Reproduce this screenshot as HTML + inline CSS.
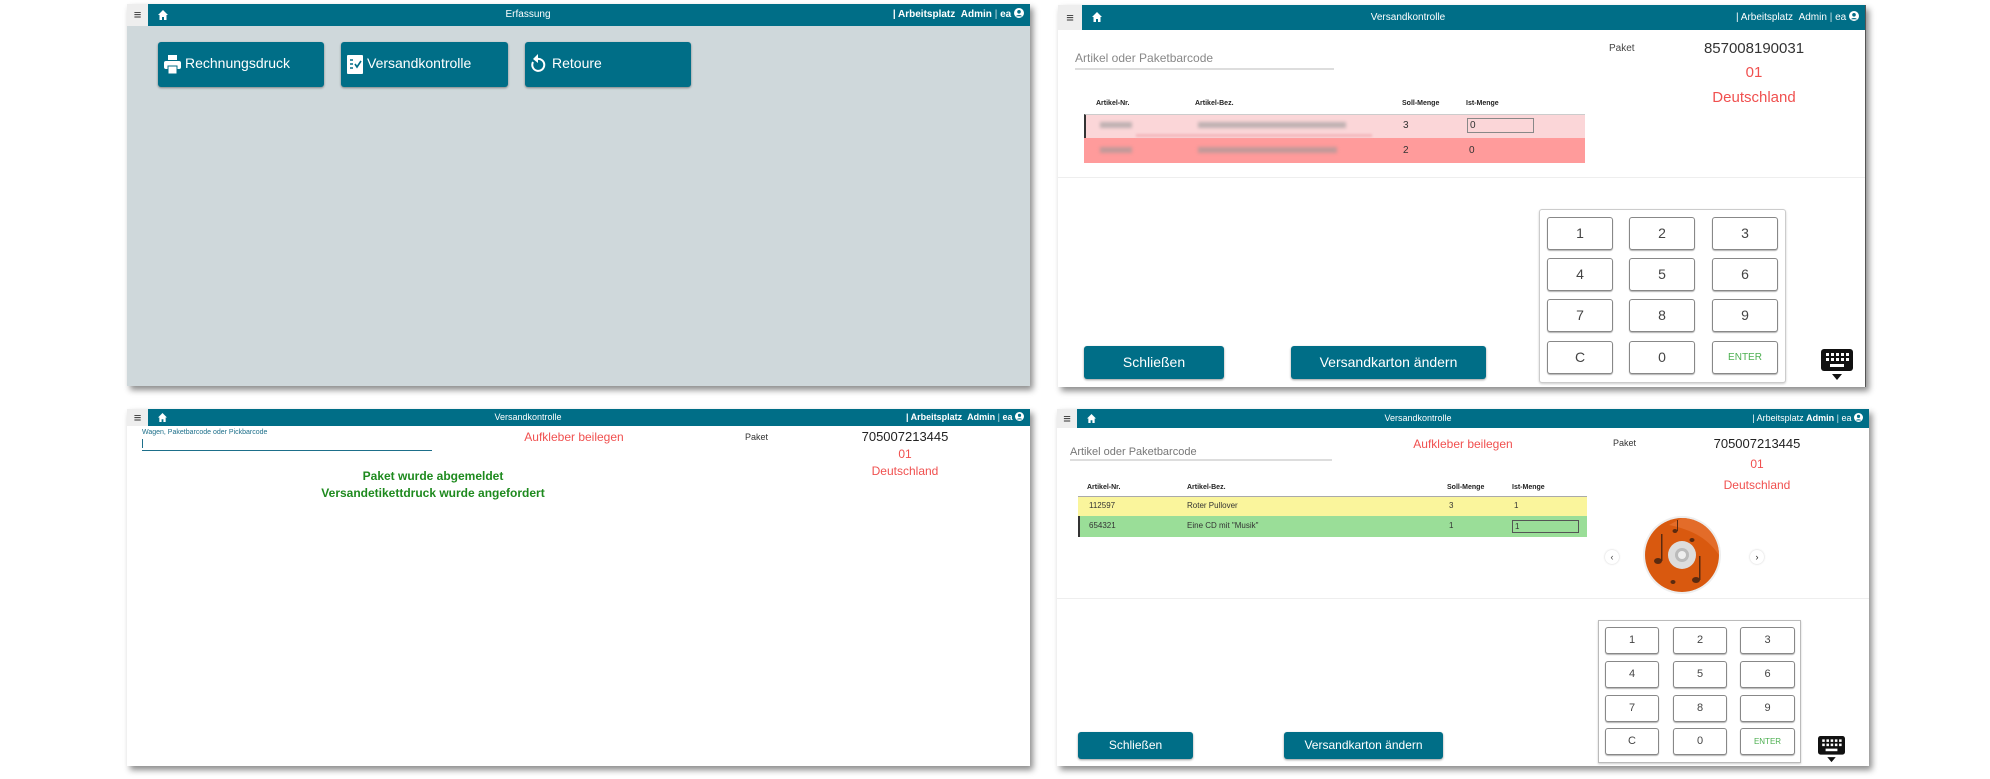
<!DOCTYPE html>
<html><head><meta charset="utf-8">
<style>
*{margin:0;padding:0;box-sizing:border-box}
body{width:1990px;height:779px;background:#fff;position:relative;overflow:hidden;font-family:"Liberation Sans",sans-serif}
.a{position:absolute}
.panel{position:absolute;background:#fff;box-shadow:3px 4px 6px rgba(0,0,0,.45)}
.hdr{position:absolute;left:0;right:0;top:0;background:#006e87;color:#fff;font-size:10px}
.ham{position:absolute;left:0;top:0;bottom:0;background:#eee;color:#333;font-size:13px;text-align:center}
.hdr .t{position:absolute;width:200px;text-align:center}
.hdr .r{position:absolute;right:6px;white-space:nowrap;font-weight:bold}
.hdr .r span{font-weight:normal;opacity:.8}
.btn{position:absolute;background:#006e87;color:#fff;border-radius:3px;box-shadow:0 1px 2px rgba(0,0,0,.4)}
.key{position:absolute;border:1.5px solid #888;border-radius:3px;background:#fff;text-align:center;color:#444;box-shadow:0 1px 1px rgba(0,0,0,.3)}
.red{color:#f0504f}
.th{position:absolute;font-size:7px;font-weight:bold;color:#222}
.blur{position:absolute;background:#999;filter:blur(1.5px);opacity:.6;height:6px}
</style></head><body>

<!-- PANEL 1 -->
<div class="panel" style="left:127px;top:4px;width:903px;height:382px;background:#cfd8db">
 <div class="hdr" style="height:22px">
  <div class="ham" style="width:21px;line-height:22px">≡</div>
  <svg class="a" style="left:31px;top:6px" width="10" height="10" viewBox="0 0 10 10"><path d="M5 0L0 5h1.5v5h2.5V7h2v3h2.5V5H10z" fill="#fff"/></svg>
  <div class="t" style="left:301px;line-height:22px;font-size:10px">Erfassung</div>
  <div class="r" style="line-height:22px;font-size:10px">| Arbeitsplatz &nbsp;Admin <span>|</span> ea <svg width="10" height="10" viewBox="0 0 10 10" style="vertical-align:-1px"><circle cx="5" cy="5" r="5" fill="#fff"/><circle cx="5" cy="3.8" r="1.8" fill="#006e87"/><path d="M1.8 8.2a4 3 0 0 1 6.4 0" fill="#006e87"/></svg></div>
 </div>
 <div class="btn" style="left:31px;top:38px;width:166px;height:45px">
  <svg class="a" style="left:6px;top:13px" width="17" height="19" viewBox="0 0 17 19"><rect x="4" y="0" width="9" height="5" fill="#fff"/><rect x="0" y="6" width="17" height="8" rx="2" fill="#fff"/><rect x="4" y="11" width="9" height="8" fill="#fff" stroke="#006e87"/></svg>
  <div class="a" style="left:27px;top:13px;font-size:14px">Rechnungsdruck</div>
 </div>
 <div class="btn" style="left:214px;top:38px;width:167px;height:45px">
  <svg class="a" style="left:6px;top:13px" width="16" height="19" viewBox="0 0 16 19"><rect width="16" height="19" rx="1" fill="#fff"/><path d="M3 5h3M3 9h3M3 13h3M8 9l2 3 4-6" stroke="#006e87" stroke-width="1.6" fill="none"/></svg>
  <div class="a" style="left:26px;top:13px;font-size:14px">Versandkontrolle</div>
 </div>
 <div class="btn" style="left:398px;top:38px;width:166px;height:45px">
  <svg class="a" style="left:6px;top:11px" width="16" height="22" viewBox="0 0 16 22"><path d="M6 6a6 6 0 1 1-4 3" stroke="#fff" stroke-width="2" fill="none"/><path d="M7 1v9L2 6z" fill="#fff"/></svg>
  <div class="a" style="left:27px;top:13px;font-size:14px">Retoure</div>
 </div>
</div>

<!-- PANEL 2 -->
<div class="panel" style="left:1058px;top:5px;width:808px;height:382px;border-right:1px solid #555">
 <div class="hdr" style="height:25px">
  <div class="ham" style="width:24px;line-height:25px">≡</div>
  <svg class="a" style="left:34px;top:7px" width="10" height="10" viewBox="0 0 10 10"><path d="M5 0L0 5h1.5v5h2.5V7h2v3h2.5V5H10z" fill="#fff"/></svg>
  <div class="t" style="left:250px;line-height:25px;font-size:10px">Versandkontrolle</div>
  <div class="r" style="line-height:25px;font-size:10px;font-weight:normal">| Arbeitsplatz &nbsp;Admin <span>|</span> ea <svg width="10" height="10" viewBox="0 0 10 10" style="vertical-align:-1px"><circle cx="5" cy="5" r="5" fill="#fff"/><circle cx="5" cy="3.8" r="1.8" fill="#006e87"/><path d="M1.8 8.2a4 3 0 0 1 6.4 0" fill="#006e87"/></svg></div>
 </div>
 <div class="a" style="left:17px;top:46px;font-size:12px;color:#888">Artikel oder Paketbarcode</div>
 <div class="a" style="left:17px;top:63px;width:259px;height:2px;background:#ddd"></div>
 <div class="a" style="left:551px;top:38px;font-size:10px;color:#444">Paket</div>
 <div class="a" style="left:636px;top:35px;width:120px;text-align:center;font-size:15px;color:#333">857008190031</div>
 <div class="a red" style="left:636px;top:59px;width:120px;text-align:center;font-size:15px">01</div>
 <div class="a red" style="left:606px;top:84px;width:180px;text-align:center;font-size:15px">Deutschland</div>
 <div class="th" style="left:38px;top:95px">Artikel-Nr.</div>
 <div class="th" style="left:137px;top:95px">Artikel-Bez.</div>
 <div class="th" style="left:344px;top:95px">Soll-Menge</div>
 <div class="th" style="left:408px;top:95px">Ist-Menge</div>
 <div class="a" style="left:26px;top:109px;width:501px;height:24px;background:#fbd6d8;border-left:2px solid #333;border-top:1px solid #ccc"></div>
 <div class="a" style="left:26px;top:133px;width:501px;height:25px;background:#ff9b9b"></div>
 <div class="blur" style="left:42px;top:117px;width:32px"></div>
 <div class="blur" style="left:140px;top:117px;width:148px"></div>
 <div class="blur" style="left:42px;top:142px;width:32px"></div>
 <div class="blur" style="left:140px;top:142px;width:139px"></div>
 <div class="a" style="left:78px;top:129px;width:236px;height:3px;background:#f3b8bd;filter:blur(1px)"></div>
 <div class="a" style="left:345px;top:115px;font-size:10px;color:#333">3</div>
 <div class="a" style="left:409px;top:113px;width:67px;height:15px;border:1px solid #888;font-size:10px;padding-left:2px;color:#333;line-height:13px">0</div>
 <div class="a" style="left:345px;top:140px;font-size:10px;color:#333">2</div>
 <div class="a" style="left:411px;top:140px;font-size:10px;color:#333">0</div>
 <div class="a" style="left:0;top:172px;width:807px;height:1px;background:#eee"></div>
 <div class="a" style="left:481px;top:204px;width:247px;height:174px;border:1px solid #ccc;border-radius:3px;background:#fff;box-shadow:0 1px 2px rgba(0,0,0,.2)"></div>
 <div class="key" style="left:489px;top:212px;width:66px;height:33px;line-height:31px;font-size:14px">1</div>
 <div class="key" style="left:571px;top:212px;width:66px;height:33px;line-height:31px;font-size:14px">2</div>
 <div class="key" style="left:654px;top:212px;width:66px;height:33px;line-height:31px;font-size:14px">3</div>
 <div class="key" style="left:489px;top:253px;width:66px;height:33px;line-height:31px;font-size:14px">4</div>
 <div class="key" style="left:571px;top:253px;width:66px;height:33px;line-height:31px;font-size:14px">5</div>
 <div class="key" style="left:654px;top:253px;width:66px;height:33px;line-height:31px;font-size:14px">6</div>
 <div class="key" style="left:489px;top:294px;width:66px;height:33px;line-height:31px;font-size:14px">7</div>
 <div class="key" style="left:571px;top:294px;width:66px;height:33px;line-height:31px;font-size:14px">8</div>
 <div class="key" style="left:654px;top:294px;width:66px;height:33px;line-height:31px;font-size:14px">9</div>
 <div class="key" style="left:489px;top:336px;width:66px;height:33px;line-height:31px;font-size:14px">C</div>
 <div class="key" style="left:571px;top:336px;width:66px;height:33px;line-height:31px;font-size:14px">0</div>
 <div class="key" style="left:654px;top:336px;width:66px;height:33px;line-height:31px;font-size:10px;color:#4caf50">ENTER</div>
 <div class="btn" style="left:26px;top:341px;width:140px;height:33px;line-height:33px;text-align:center;font-size:14px">Schließen</div>
 <div class="btn" style="left:233px;top:341px;width:195px;height:33px;line-height:33px;text-align:center;font-size:14px">Versandkarton ändern</div>
 <svg class="a" style="left:763px;top:344px" width="32" height="32" viewBox="0 0 32 32"><rect x="0" y="0" width="32" height="22" rx="3" fill="#111"/><g fill="#fff"><rect x="5" y="4" width="3" height="3"/><rect x="10" y="4" width="3" height="3"/><rect x="15" y="4" width="3" height="3"/><rect x="20" y="4" width="3" height="3"/><rect x="25" y="4" width="3" height="3"/><rect x="5" y="9" width="3" height="3"/><rect x="10" y="9" width="3" height="3"/><rect x="15" y="9" width="3" height="3"/><rect x="20" y="9" width="3" height="3"/><rect x="25" y="9" width="3" height="3"/><rect x="9" y="15" width="14" height="3"/></g><path d="M11 25h10l-5 6z" fill="#111"/></svg>
</div>

<!-- PANEL 3 -->
<div class="panel" style="left:127px;top:409px;width:903px;height:357px">
 <div class="hdr" style="height:17px">
  <div class="ham" style="width:21px;line-height:17px">≡</div>
  <svg class="a" style="left:31px;top:4px" width="9" height="9" viewBox="0 0 10 10"><path d="M5 0L0 5h1.5v5h2.5V7h2v3h2.5V5H10z" fill="#fff"/></svg>
  <div class="t" style="left:301px;line-height:17px;font-size:9px">Versandkontrolle</div>
  <div class="r" style="line-height:17px;font-size:9px">| Arbeitsplatz &nbsp;Admin <span>|</span> ea <svg width="9" height="9" viewBox="0 0 10 10" style="vertical-align:-1px"><circle cx="5" cy="5" r="5" fill="#fff"/><circle cx="5" cy="3.8" r="1.8" fill="#006e87"/><path d="M1.8 8.2a4 3 0 0 1 6.4 0" fill="#006e87"/></svg></div>
 </div>
 <div class="a" style="left:15px;top:20px;font-size:7px;color:#1d6f8a">Wagen, Paketbarcode oder Pickbarcode</div>
 <div class="a" style="left:15px;top:30px;width:1px;height:9px;background:#1d6f8a"></div>
 <div class="a" style="left:15px;top:41px;width:290px;height:1px;background:#1d6f8a"></div>
 <div class="a red" style="left:377px;top:21px;width:140px;text-align:center;font-size:12px">Aufkleber beilegen</div>
 <div class="a" style="left:618px;top:23px;font-size:9px;color:#333">Paket</div>
 <div class="a" style="left:718px;top:20px;width:120px;text-align:center;font-size:13px;color:#222">705007213445</div>
 <div class="a red" style="left:718px;top:38px;width:120px;text-align:center;font-size:12px">01</div>
 <div class="a red" style="left:718px;top:55px;width:120px;text-align:center;font-size:12px">Deutschland</div>
 <div class="a" style="left:156px;top:60px;width:300px;text-align:center;font-size:12px;font-weight:bold;color:#1e8a1e">Paket wurde abgemeldet</div>
 <div class="a" style="left:156px;top:77px;width:300px;text-align:center;font-size:12px;font-weight:bold;color:#1e8a1e">Versandetikettdruck wurde angefordert</div>
</div>

<!-- PANEL 4 -->
<div class="panel" style="left:1057px;top:409px;width:812px;height:357px">
 <div class="hdr" style="height:19px">
  <div class="ham" style="width:20px;line-height:19px">≡</div>
  <svg class="a" style="left:30px;top:5px" width="9" height="9" viewBox="0 0 10 10"><path d="M5 0L0 5h1.5v5h2.5V7h2v3h2.5V5H10z" fill="#fff"/></svg>
  <div class="t" style="left:261px;line-height:19px;font-size:9px">Versandkontrolle</div>
  <div class="r" style="line-height:19px;font-size:9px;font-weight:normal">| Arbeitsplatz <b>Admin</b> <span>|</span> ea <svg width="9" height="9" viewBox="0 0 10 10" style="vertical-align:-1px"><circle cx="5" cy="5" r="5" fill="#fff"/><circle cx="5" cy="3.8" r="1.8" fill="#006e87"/><path d="M1.8 8.2a4 3 0 0 1 6.4 0" fill="#006e87"/></svg></div>
 </div>
 <div class="a" style="left:13px;top:37px;font-size:11px;color:#777">Artikel oder Paketbarcode</div>
 <div class="a" style="left:13px;top:50px;width:262px;height:2px;background:#ddd"></div>
 <div class="a red" style="left:346px;top:28px;width:120px;text-align:center;font-size:12px">Aufkleber beilegen</div>
 <div class="a" style="left:556px;top:29px;font-size:9px;color:#333">Paket</div>
 <div class="a" style="left:640px;top:27px;width:120px;text-align:center;font-size:13px;color:#222">705007213445</div>
 <div class="a red" style="left:640px;top:48px;width:120px;text-align:center;font-size:12px">01</div>
 <div class="a red" style="left:640px;top:69px;width:120px;text-align:center;font-size:12px">Deutschland</div>
 <div class="th" style="left:30px;top:75px">Artikel-Nr.</div>
 <div class="th" style="left:130px;top:75px">Artikel-Bez.</div>
 <div class="th" style="left:390px;top:75px">Soll-Menge</div>
 <div class="th" style="left:455px;top:75px">Ist-Menge</div>
 <div class="a" style="left:21px;top:87px;width:509px;height:20px;background:#faf59c;border-top:1px solid #aaa"></div>
 <div class="a" style="left:21px;top:107px;width:509px;height:21px;background:#9ade98;border-left:2px solid #333"></div>
 <div class="a" style="left:32px;top:92px;font-size:8px;color:#333">112597</div>
 <div class="a" style="left:130px;top:92px;font-size:8px;color:#333">Roter Pullover</div>
 <div class="a" style="left:392px;top:92px;font-size:8px;color:#333">3</div>
 <div class="a" style="left:457px;top:92px;font-size:8px;color:#333">1</div>
 <div class="a" style="left:32px;top:112px;font-size:8px;color:#333">654321</div>
 <div class="a" style="left:130px;top:112px;font-size:8px;color:#333">Eine CD mit "Musik"</div>
 <div class="a" style="left:392px;top:112px;font-size:8px;color:#333">1</div>
 <div class="a" style="left:455px;top:111px;width:67px;height:13px;border:1px solid #555;font-size:8px;padding-left:2px;color:#333;line-height:11px">1</div>
 <svg class="a" style="left:583px;top:107px" width="90" height="80" viewBox="0 0 90 80">
  <circle cx="42" cy="39" r="39" fill="#eee"/>
  <circle cx="42" cy="39" r="37" fill="#d9590f"/>
  <path d="M42 2a37 37 0 0 1 37 37c-10-15-25-25-50-30z" fill="#e9793a" opacity=".6"/>
  <circle cx="42" cy="39" r="14" fill="#ddd"/>
  <circle cx="42" cy="39" r="7" fill="#bbb"/>
  <circle cx="42" cy="39" r="4" fill="#eee"/>
  <g fill="#5a2a10"><ellipse cx="18" cy="45" rx="4" ry="3"/><rect x="21" y="18" width="1.5" height="27"/><ellipse cx="56" cy="64" rx="4" ry="3"/><rect x="59" y="40" width="1.5" height="24"/><ellipse cx="35" cy="15" rx="2.5" ry="2"/><rect x="37" y="4" width="1" height="11"/><ellipse cx="52" cy="24" rx="2.5" ry="2"/><ellipse cx="33" cy="66" rx="2.5" ry="2"/></g>
 </svg>
 <div class="a" style="left:548px;top:141px;width:14px;height:14px;border-radius:7px;box-shadow:0 0 2px rgba(0,0,0,.2);font-size:9px;text-align:center;line-height:14px;color:#444">‹</div>
 <div class="a" style="left:693px;top:141px;width:14px;height:14px;border-radius:7px;box-shadow:0 0 2px rgba(0,0,0,.2);font-size:9px;text-align:center;line-height:14px;color:#222">›</div>
 <div class="a" style="left:0;top:189px;width:812px;height:1px;background:#eee"></div>
 <div class="a" style="left:541px;top:211px;width:203px;height:143px;border:1px solid #bbb;background:#fff;box-shadow:0 1px 2px rgba(0,0,0,.2)"></div>
 <div class="key" style="left:548px;top:218px;width:54px;height:27px;line-height:25px;font-size:11px">1</div>
 <div class="key" style="left:616px;top:218px;width:54px;height:27px;line-height:25px;font-size:11px">2</div>
 <div class="key" style="left:683px;top:218px;width:55px;height:27px;line-height:25px;font-size:11px">3</div>
 <div class="key" style="left:548px;top:252px;width:54px;height:27px;line-height:25px;font-size:11px">4</div>
 <div class="key" style="left:616px;top:252px;width:54px;height:27px;line-height:25px;font-size:11px">5</div>
 <div class="key" style="left:683px;top:252px;width:55px;height:27px;line-height:25px;font-size:11px">6</div>
 <div class="key" style="left:548px;top:286px;width:54px;height:27px;line-height:25px;font-size:11px">7</div>
 <div class="key" style="left:616px;top:286px;width:54px;height:27px;line-height:25px;font-size:11px">8</div>
 <div class="key" style="left:683px;top:286px;width:55px;height:27px;line-height:25px;font-size:11px">9</div>
 <div class="key" style="left:548px;top:319px;width:54px;height:27px;line-height:25px;font-size:11px">C</div>
 <div class="key" style="left:616px;top:319px;width:54px;height:27px;line-height:25px;font-size:11px">0</div>
 <div class="key" style="left:683px;top:319px;width:55px;height:27px;line-height:25px;font-size:8px;color:#4caf50">ENTER</div>
 <div class="btn" style="left:21px;top:323px;width:115px;height:27px;line-height:27px;text-align:center;font-size:12px">Schließen</div>
 <div class="btn" style="left:227px;top:323px;width:159px;height:27px;line-height:27px;text-align:center;font-size:12px">Versandkarton ändern</div>
 <svg class="a" style="left:761px;top:327px" width="27" height="27" viewBox="0 0 32 32"><rect x="0" y="0" width="32" height="22" rx="3" fill="#111"/><g fill="#fff"><rect x="5" y="4" width="3" height="3"/><rect x="10" y="4" width="3" height="3"/><rect x="15" y="4" width="3" height="3"/><rect x="20" y="4" width="3" height="3"/><rect x="25" y="4" width="3" height="3"/><rect x="5" y="9" width="3" height="3"/><rect x="10" y="9" width="3" height="3"/><rect x="15" y="9" width="3" height="3"/><rect x="20" y="9" width="3" height="3"/><rect x="25" y="9" width="3" height="3"/><rect x="9" y="15" width="14" height="3"/></g><path d="M11 25h10l-5 6z" fill="#111"/></svg>
</div>
</body></html>
